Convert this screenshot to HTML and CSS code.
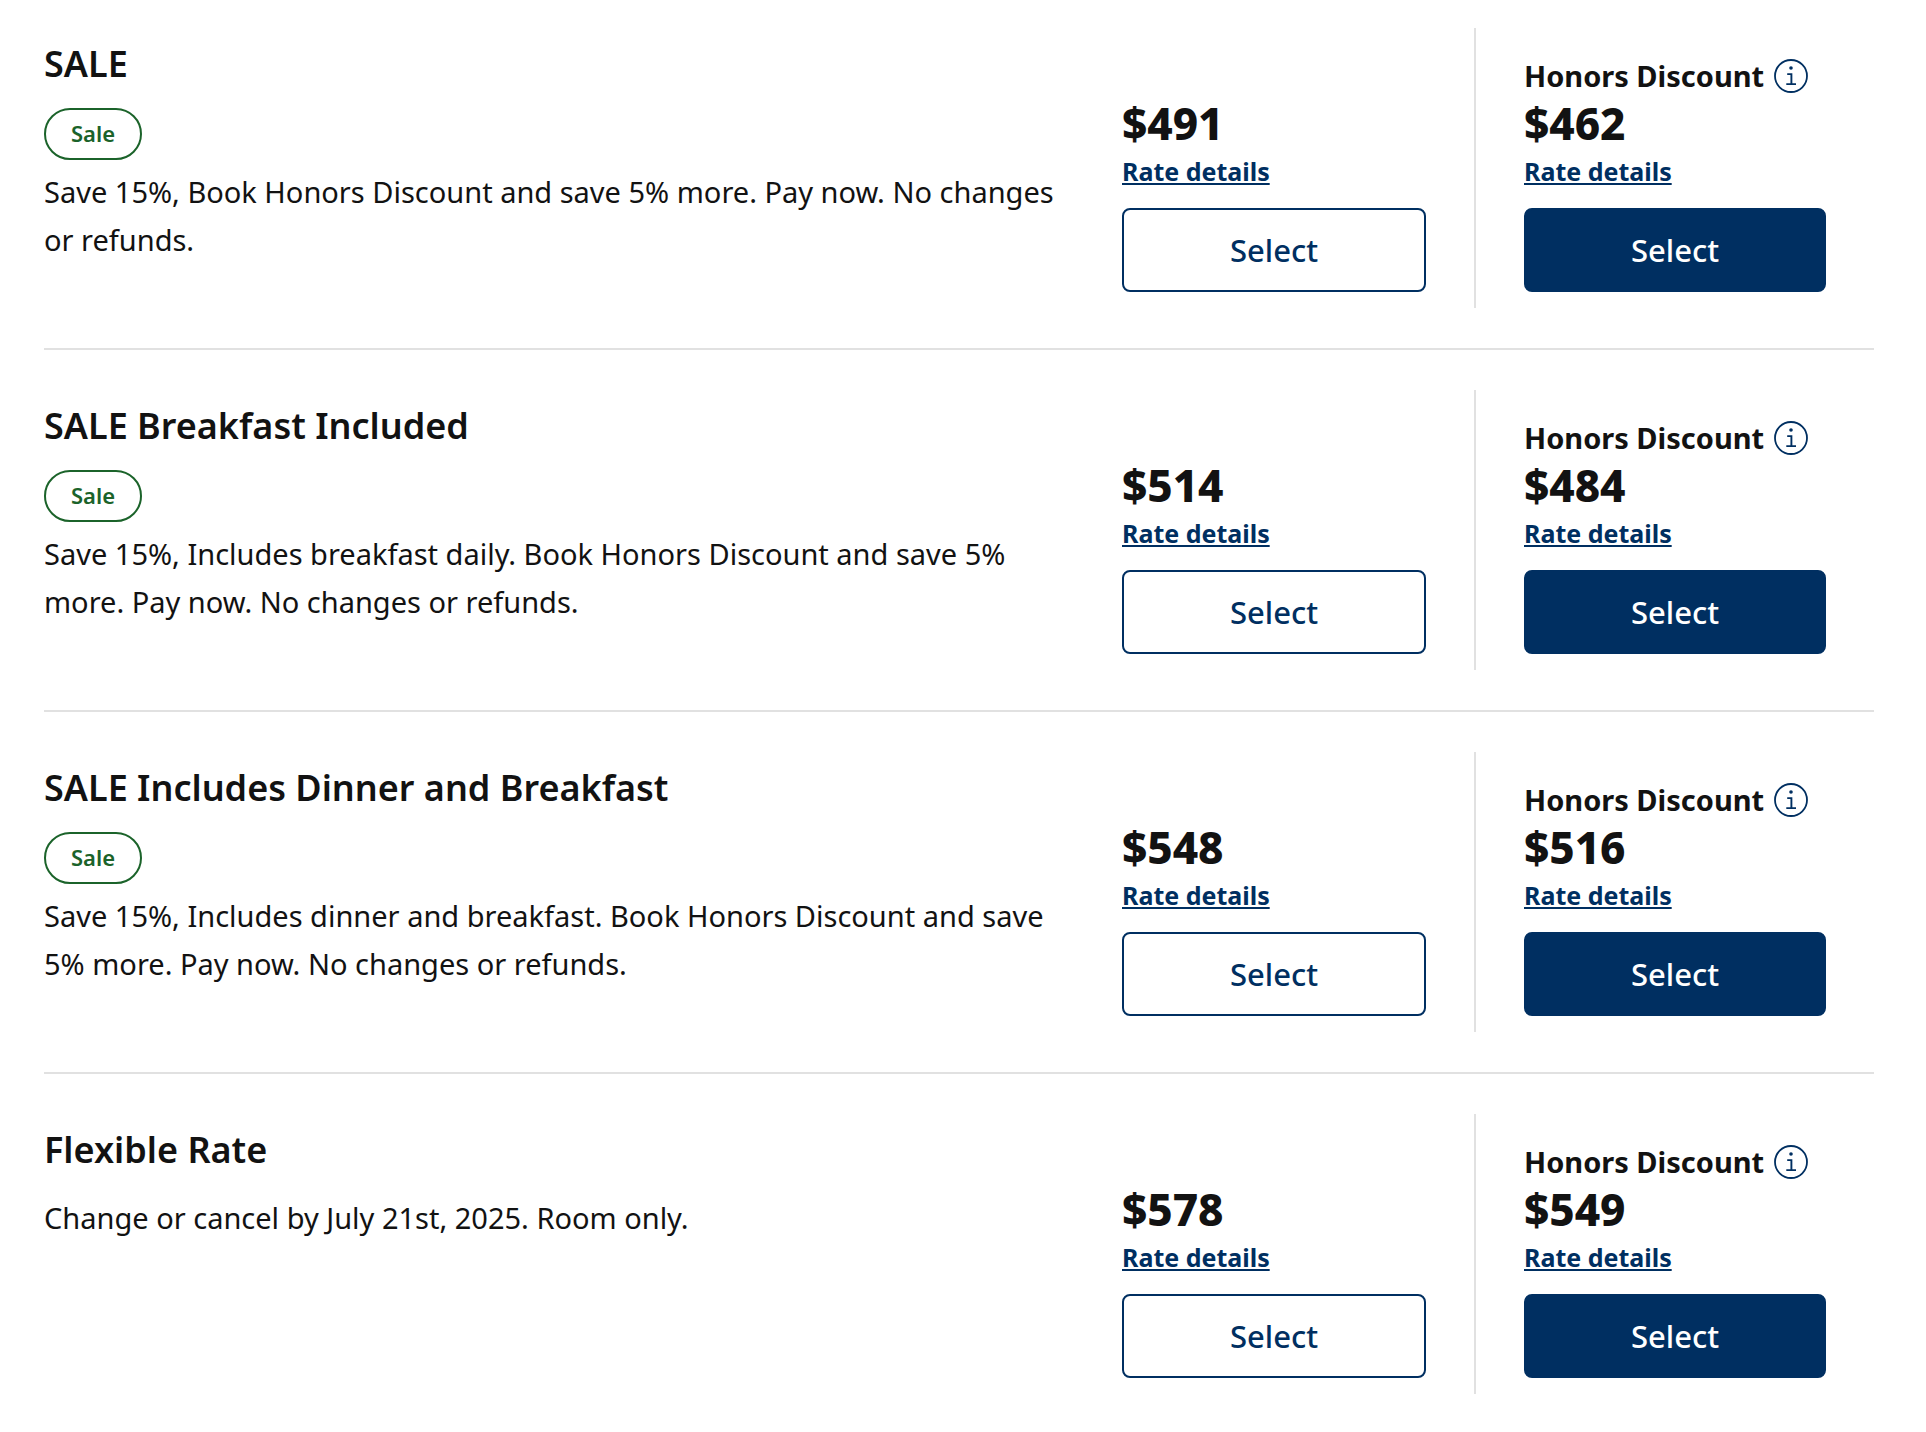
FILE: index.html
```html
<!DOCTYPE html>
<html lang="en">
<head>
    <meta charset="UTF-8">
    <meta name="viewport" content="width=device-width, initial-scale=1.0">
    <title>Room Rates</title>
    <link rel="stylesheet" href="styles.css">
</head>
<body>
    <!-- info icon, reused in every row -->
    <svg class="sprite" aria-hidden="true">
        <symbol id="info" viewBox="0 0 34 34">
            <circle cx="17" cy="17" r="16" fill="none" stroke="currentColor" stroke-width="1.8"/>
            <circle cx="17" cy="9" r="1.8" fill="currentColor"/>
            <path d="M13.2 15.1H17.4V25.1M12.3 25.1H22" fill="none" stroke="currentColor" stroke-width="1.9"/>
        </symbol>
    </svg>

    <main class="rates">
        <section class="rate">
            <div class="rate-info">
                <h2>SALE</h2>
                <span class="badge">Sale</span>
                <p>Save 15%, Book Honors Discount and save 5% more. Pay now. No changes or refunds.</p>
            </div>
            <div class="offer">
                <div class="price">$491</div>
                <a href="#" class="details">Rate details</a>
                <button type="button" class="btn">Select</button>
            </div>
            <div class="offer honors">
                <div class="offer-name">Honors Discount
                    <button type="button" class="info-btn" aria-label="Honors Discount info"><svg><use href="#info"/></svg></button>
                </div>
                <div class="price">$462</div>
                <a href="#" class="details">Rate details</a>
                <button type="button" class="btn btn-primary">Select</button>
            </div>
        </section>

        <section class="rate">
            <div class="rate-info">
                <h2>SALE Breakfast Included</h2>
                <span class="badge">Sale</span>
                <p>Save 15%, Includes breakfast daily. Book Honors Discount and save 5% more. Pay now. No changes or refunds.</p>
            </div>
            <div class="offer">
                <div class="price">$514</div>
                <a href="#" class="details">Rate details</a>
                <button type="button" class="btn">Select</button>
            </div>
            <div class="offer honors">
                <div class="offer-name">Honors Discount
                    <button type="button" class="info-btn" aria-label="Honors Discount info"><svg><use href="#info"/></svg></button>
                </div>
                <div class="price">$484</div>
                <a href="#" class="details">Rate details</a>
                <button type="button" class="btn btn-primary">Select</button>
            </div>
        </section>

        <section class="rate">
            <div class="rate-info">
                <h2>SALE Includes Dinner and Breakfast</h2>
                <span class="badge">Sale</span>
                <p>Save 15%, Includes dinner and breakfast. Book Honors Discount and save 5% more. Pay now. No changes or refunds.</p>
            </div>
            <div class="offer">
                <div class="price">$548</div>
                <a href="#" class="details">Rate details</a>
                <button type="button" class="btn">Select</button>
            </div>
            <div class="offer honors">
                <div class="offer-name">Honors Discount
                    <button type="button" class="info-btn" aria-label="Honors Discount info"><svg><use href="#info"/></svg></button>
                </div>
                <div class="price">$516</div>
                <a href="#" class="details">Rate details</a>
                <button type="button" class="btn btn-primary">Select</button>
            </div>
        </section>

        <section class="rate">
            <div class="rate-info">
                <h2>Flexible Rate</h2>
                <p>Change or cancel by July 21st, 2025. Room only.</p>
            </div>
            <div class="offer">
                <div class="price">$578</div>
                <a href="#" class="details">Rate details</a>
                <button type="button" class="btn">Select</button>
            </div>
            <div class="offer honors">
                <div class="offer-name">Honors Discount
                    <button type="button" class="info-btn" aria-label="Honors Discount info"><svg><use href="#info"/></svg></button>
                </div>
                <div class="price">$549</div>
                <a href="#" class="details">Rate details</a>
                <button type="button" class="btn btn-primary">Select</button>
            </div>
        </section>
    </main>
</body>
</html>
```
FILE: styles.css
```css
* {
    box-sizing: border-box;
}

body {
    margin: 0;
    background-color: #fff;
    color: #121212;
    font-family: 'Noto Sans', 'Open Sans', sans-serif;
    font-size: 29px;
}

.sprite {
    display: none;
}

.rates {
    padding: 0 52px 0 44px;
}

.rate {
    display: grid;
    grid-template-columns: 1fr 400px 400px;
    padding: 40px 0;
    border-bottom: 2px solid #e1e1e1;
}

.rate:first-child {
    padding-top: 28px;
}

.rate:last-child {
    padding-bottom: 0;
    border-bottom: none;
}

/* left column */
.rate-info {
    display: flex;
    flex-direction: column;
    align-items: flex-start;
    padding: 12px 16px 0 0;
}

.rate-info h2 {
    margin: 0 0 20px;
    font-size: 36px;
    font-weight: 600;
    line-height: 48px;
}

.rate-info p {
    margin: 0;
    line-height: 48px;
}

.badge {
    margin-bottom: 8px;
    padding: 0 25px 2px;
    border: 2px solid #1b632a;
    border-radius: 26px;
    color: #1b632a;
    font-size: 22px;
    font-weight: 600;
    line-height: 46px;
}

/* price columns */
.offer {
    display: flex;
    flex-direction: column;
    align-items: flex-start;
    justify-content: flex-end;
    min-height: 280px;
    padding: 0 48px 16px;
}

.honors {
    border-left: 2px solid #e1e1e1;
}

.offer-name {
    display: flex;
    align-items: center;
    gap: 10px;
    font-weight: 700;
    line-height: 42px;
    white-space: nowrap;
}

.info-btn {
    display: flex;
    padding: 0;
    border: none;
    background: none;
    color: #002f61;
    cursor: pointer;
}

.info-btn svg {
    width: 34px;
    height: 34px;
}

.price {
    font-size: 44px;
    font-weight: 800;
    line-height: 53px;
}

.details {
    margin-bottom: 15px;
    color: #002f61;
    font-size: 25px;
    font-weight: 700;
    line-height: 43px;
    text-decoration-thickness: 2px;
    text-underline-offset: 2px;
}

.btn {
    width: 100%;
    height: 84px;
    border: 2px solid #002f61;
    border-radius: 8px;
    background-color: #fff;
    color: #002f61;
    font-family: inherit;
    font-size: 31px;
    font-weight: 500;
    cursor: pointer;
}

.btn-primary {
    background-color: #002f61;
    color: #fff;
}
```
